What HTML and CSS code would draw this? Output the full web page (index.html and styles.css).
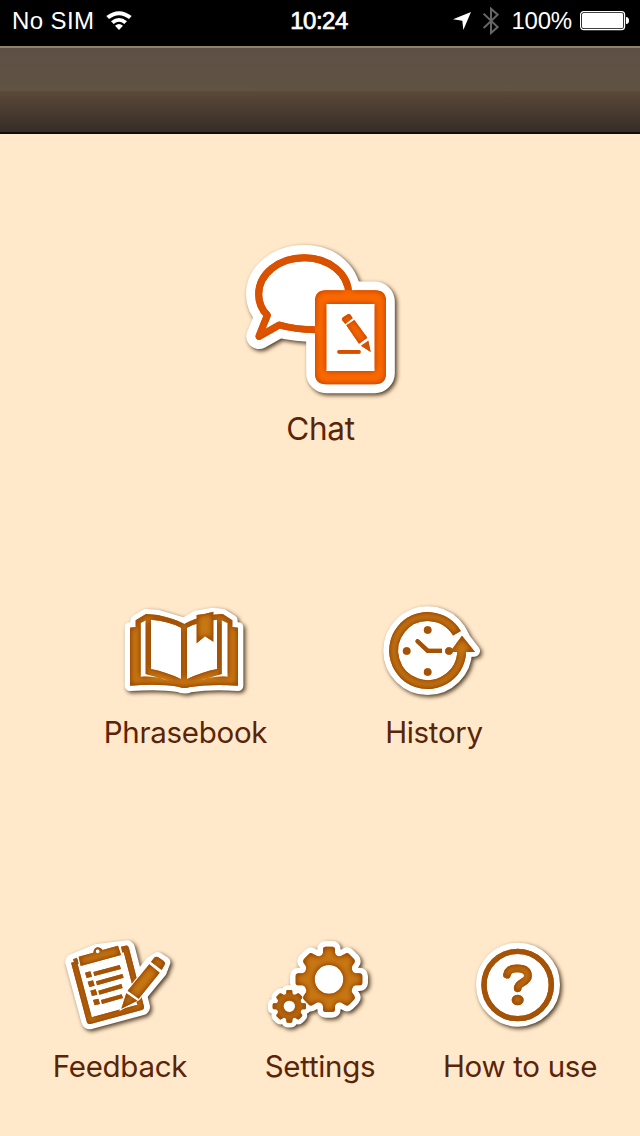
FILE: index.html
```html
<!DOCTYPE html>
<html lang="en">
<head>
    <meta charset="UTF-8">
    <meta name="viewport" content="width=device-width, initial-scale=1.0">
    <title>Menu</title>
    <link rel="stylesheet" href="styles.css">
</head>
<body>

    <svg class="defs" width="0" height="0">
        <defs>
            <!-- darker edge inside each icon shape -->
            <filter id="edge" x="-15%" y="-15%" width="130%" height="130%" color-interpolation-filters="sRGB">
                <feGaussianBlur in="SourceAlpha" stdDeviation="9"/>
                <feComponentTransfer result="inv"><feFuncA type="linear" slope="-2.2" intercept="2.2"/></feComponentTransfer>
                <feFlood flood-color="#a35207"/>
                <feComposite in2="inv" operator="in"/>
                <feComposite in2="SourceAlpha" operator="in" result="rim"/>
                <feMerge><feMergeNode in="SourceGraphic"/><feMergeNode in="rim"/></feMerge>
            </filter>
            <filter id="edgeChat" x="-15%" y="-15%" width="130%" height="130%" color-interpolation-filters="sRGB">
                <feGaussianBlur in="SourceAlpha" stdDeviation="9"/>
                <feComponentTransfer result="inv"><feFuncA type="linear" slope="-2" intercept="2"/></feComponentTransfer>
                <feFlood flood-color="#d65000"/>
                <feComposite in2="inv" operator="in"/>
                <feComposite in2="SourceAlpha" operator="in" result="rim"/>
                <feMerge><feMergeNode in="SourceGraphic"/><feMergeNode in="rim"/></feMerge>
            </filter>
            <path id="gearShape" fill-rule="evenodd" d="M-18 -90 Q-18 -98 -10 -98 H10 Q18 -98 18 -90 V-80 Q19 -73 26 -70 Q34 -67 40 -72 L49 -77 Q55 -81 60 -76 L75 -61 Q80 -55 76 -49 L70 -41 Q66 -34 70 -26 Q73 -19 80 -18 H91 Q100 -18 100 -10 V10 Q100 18 91 18 H80 Q73 19 70 26 Q66 34 70 41 L76 49 Q80 55 75 61 L60 76 Q55 81 49 77 L40 72 Q34 67 26 70 Q19 73 18 80 V90 Q18 98 10 98 H-10 Q-18 98 -18 90 V80 Q-19 73 -26 70 Q-34 67 -40 72 L-49 77 Q-55 81 -60 76 L-75 61 Q-80 55 -76 49 L-70 41 Q-66 34 -70 26 Q-73 19 -80 18 H-91 Q-100 18 -100 10 V-10 Q-100 -18 -91 -18 H-80 Q-73 -19 -70 -26 Q-66 -34 -70 -41 L-76 -49 Q-80 -55 -75 -61 L-60 -76 Q-55 -81 -49 -77 L-40 -72 Q-34 -67 -26 -70 Q-19 -73 -18 -80 Z M43 0 A43 43 0 1 0 -43 0 A43 43 0 1 0 43 0 Z"/>
        </defs>
    </svg>

    <header class="status">
        <div class="status-left">
            <span class="carrier">No SIM</span>
            <svg class="wifi" width="26" height="20" viewBox="0 0 78 60">
                <path d="M1 15 Q39 -13 77 15 L69 24 Q39 1 9 24Z M15 31 Q39 11 63 31 L55 39 Q39 25 23 39Z M27 44 Q39 34 51 44 L39 57Z"/>
            </svg>
        </div>
        <div class="status-time">10:24</div>
        <div class="status-right">
            <svg class="location" width="18" height="18" viewBox="0 0 54 54">
                <path d="M54 0 L31 54 L28 26 L0 22Z"/>
            </svg>
            <svg class="bluetooth" width="16" height="28" viewBox="0 0 48 84">
                <path d="M2 20 L44 60 L24 78 V5 L44 23 L2 63"/>
            </svg>
            <span class="percent">100%</span>
            <svg class="battery" width="50" height="20" viewBox="0 0 50 20">
                <rect class="case" x=".6" y=".6" width="44" height="18" rx="3"/>
                <rect x="2" y="2" width="41.2" height="15.2" rx="1.6"/>
                <path d="M46 6 Q49 6 49 9.5 Q49 13 46 13Z"/>
            </svg>
        </div>
    </header>

    <div class="navbar"></div>

    <main class="menu">
        <div class="row row-chat">
            <a class="item">
                <svg class="icon" width="160" height="160" viewBox="15 15 480 480">
                    <g class="paper">
                        <path stroke-width="76" d="M300 282 Q190 286 133 270 L72 304 L98 241 Q71 215 71 178 C71 118 130 68 208 68 C285 68 341 118 341 190Z"/>
                        <rect x="240" y="166" width="213" height="282" rx="34" stroke-width="53"/>
                    </g>
                    <g class="chat-ink" filter="url(#edgeChat)">
                        <path class="chat-line" d="M250 284 Q185 285 133 270 L72 304 L97 241 Q71 215 71 178 C71 118 130 68 208 68 C280 68 341 115 341 178"/>
                        <path fill-rule="evenodd" d="M273 166 H420 Q453 166 453 199 V415 Q453 448 420 448 H273 Q240 448 240 415 V199 Q240 166 273 166Z M274 207 V408 H419 V207Z"/>
                        <path d="M321 255 Q319 250 324 247 L338 238 Q343 235 347 240 L353 250 L331 267Z M334 271 L358 255 L397 308 L372 326Z M378 332 L400 317 L407 351Z"/>
                        <rect x="307" y="345" width="70" height="11" rx="5"/>
                    </g>
                </svg>
                <span class="label label-chat">Chat</span>
            </a>
        </div>

        <div class="row row-middle">
            <a class="item">
                <svg class="icon" width="130" height="95" viewBox="75 30 390 285">
                    <path class="paper" stroke-width="32" d="M105 98 L122 96 V76 L153 58 L188 60 L268 84 L305 62 L355 54 L383 58 L412 76 V96 L429 98 V272 Q350 266 285 276 Q268 283 250 275 Q195 266 105 272Z"/>
                    <path class="ink" filter="url(#edge)" fill-rule="evenodd" d="M105 98 L122 96 V76 L153 57 L188 60 Q240 71 268 87 Q294 71 346 60 L383 57 L412 76 V96 L429 98 V272 Q350 266 285 276 Q268 283 250 275 Q195 266 105 272Z M137 84 L152 76 V237 L222 257 Q180 242 137 245Z M398 84 L380 76 V237 L312 257 Q355 242 398 245Z M168 74 Q220 78 258 98 V252 Q215 232 168 222Z M366 74 Q315 78 276 98 V252 Q319 232 366 222Z"/>
                    <path class="ink" filter="url(#edge)" d="M305 60 Q332 57 355 50 V140 L330 124 L305 145Z"/>
                </svg>
                <span class="label label-phrasebook">Phrasebook</span>
            </a>
            <a class="item">
                <svg class="icon" width="110" height="95" viewBox="30 30 330 285">
                    <g class="paper">
                        <circle cx="173" cy="167" r="116" stroke-width="34"/>
                        <path stroke-width="34" d="M276 120 L313 168 L240 170Z"/>
                    </g>
                    <g class="ink" filter="url(#edge)">
                        <path class="ring" d="M275 164 A102 102 0 1 1 261 115"/>
                        <path d="M276 122 L315 171 H240Z"/>
                        <circle cx="173" cy="105" r="11.5"/>
                        <circle cx="110" cy="168" r="11.5"/>
                        <circle cx="173" cy="231" r="11.5"/>
                        <circle cx="237" cy="168" r="11.5"/>
                        <path d="M147 134 L176 161 H216 V174 H171 L138 143 Q134 138 138 134 Q142 130 147 134Z"/>
                    </g>
                </svg>
                <span class="label label-history">History</span>
            </a>
        </div>

        <div class="row row-bottom">
            <a class="item">
                <svg class="icon" width="120" height="100" viewBox="30 15 360 300">
                    <g class="paper">
                        <path stroke-width="50" d="M71 96 L119 273 L275 231 L230 56 L143 67Z"/>
                        <path stroke-width="34" d="M323 83 L344 97 L333 126 L264 209 L215 235 L233 183 L304 95Z"/>
                    </g>
                    <g class="ink" filter="url(#edge)">
                        <path class="frame" d="M72 96 L119 273 L273 231 L228 56 L215 59 M72 96 L84 92"/>
                        <path d="M105 128 l16 -4 5 16 -16 4Z M113 155 l16 -4 5 16 -16 4Z M121 182 l16 -4 5 16 -16 4Z M129 210 l16 -4 5 16 -16 4Z"/>
                        <path d="M130 126 L209 105 L213 117 L133 138Z M138 154 L217 132 L221 143 L141 166Z M145 182 L214 162 L218 174 L148 194Z M153 210 L215 193 L219 204 L156 222Z"/>
                    </g>
                    <path class="gap" d="M86 80 L130 68 Q132 53 143 52 Q153 52 158 60 L204 47 L213 75 L92 108Z"/>
                    <path class="ink" filter="url(#edge)" fill-rule="evenodd" d="M86 80 L130 68 Q132 53 143 52 Q153 52 158 60 L204 47 L213 75 L92 108Z M149 64 A6 6 0 1 0 137 64 A6 6 0 1 0 149 64Z"/>
                    <path class="gap" d="M298 103 L330 128 L266 207 L215 235 L233 183Z"/>
                    <g class="ink" filter="url(#edge)">
                        <path d="M303 95 L314 82 Q319 78 325 82 L341 93 Q347 98 344 104 L335 120Z"/>
                        <path d="M298 103 L329 128 L266 206 L233 182Z"/>
                        <path d="M229 190 L262 212 L214 236Z"/>
                    </g>
                </svg>
                <span class="label">Feedback</span>
            </a>
            <a class="item">
                <svg class="icon" width="110" height="100" viewBox="30 15 330 300">
                    <g class="paper">
                        <use href="#gearShape" transform="translate(222 148)" stroke-width="34"/>
                        <use href="#gearShape" transform="translate(103 229) scale(.5)" stroke-width="58"/>
                        <circle cx="222" cy="148" r="50"/>
                    </g>
                    <use class="ink" href="#gearShape" transform="translate(222 148)" filter="url(#edge)"/>
                    <g class="gap">
                        <use href="#gearShape" transform="translate(103 229) scale(.5)"/>
                        <circle cx="103" cy="229" r="25"/>
                    </g>
                    <g class="ink" filter="url(#edge)">
                        <use href="#gearShape" transform="translate(103 229) scale(.5)"/>
                    </g>
                    <circle class="small-ring" cx="103" cy="229" r="20"/>
                </svg>
                <span class="label">Settings</span>
            </a>
            <a class="item">
                <svg class="icon" width="100" height="100" viewBox="105 15 300 300">
                    <circle class="paper" cx="249" cy="164" r="109" stroke-width="34"/>
                    <g class="ink" filter="url(#edge)">
                        <circle class="help-ring" cx="248" cy="165" r="101"/>
                        <path class="help-hook" d="M216 134 Q220 115 246 115 Q279 115 279 138 C279 158 248 156 248 175"/>
                        <ellipse cx="248" cy="210" rx="18" ry="16"/>
                    </g>
                </svg>
                <span class="label">How to use</span>
            </a>
        </div>
    </main>

</body>
</html>
```

FILE: styles.css
```css
body {
    margin: 0;
    width: 640px;
    height: 1136px;
    overflow: hidden;
    background-color: #ffe9ca;
    font-family: Inter, "Liberation Sans", sans-serif;
    color: #5a2408;
}
.defs {
    display: block;
}

/* status bar */
.status {
    display: grid;
    grid-template-columns: 1fr 60px 1fr;
    height: 46px;
    box-sizing: border-box;
    padding: 0 10px 5px 12px;
    background-color: #000;
    color: #fff;
    fill: #fff;
    font-family: "Liberation Sans", sans-serif;
    font-size: 24px;
    line-height: 42px;
}
.status-left,
.status-right {
    display: flex;
    align-items: center;
}
.status-right {
    justify-content: flex-end;
}
.wifi {
    margin-left: 12px;
}
.carrier {
    letter-spacing: 0.4px;
}
.status-time {
    margin-left: -4px;
    text-align: center;
    letter-spacing: -0.5px;
    -webkit-text-stroke: 0.7px #fff;
}
.location {
    margin-right: 12px;
}
.bluetooth path {
    fill: none;
    stroke: #666;
    stroke-width: 6;
}
.percent {
    margin: 0 8px 0 12px;
    letter-spacing: -0.2px;
}
.battery .case {
    fill: none;
    stroke: #fff;
    stroke-width: 1.2;
}

.navbar {
    height: 88px;
    box-sizing: border-box;
    border-top: 2px solid #927f66;
    border-bottom: 2px solid #120d09;
    background: linear-gradient(#5c5045 0, #5f5144 20px, #615342 43px, #5c4939 43px, #362d27 84px);
}

/* menu */
.menu {
    padding-top: 106px;
}
.row {
    display: grid;
    justify-content: center;
}
.row-middle {
    grid-template-columns: 170px 170px;
    column-gap: 80px;
    margin-top: 156px;
    padding-right: 20px;
}
.row-bottom {
    grid-template-columns: repeat(3, 200px);
    margin-top: 183px;
}
.item {
    display: flex;
    flex-direction: column;
    align-items: center;
}
.icon {
    display: block;
    overflow: visible;
    filter: drop-shadow(2px 2px 2px rgba(50, 30, 10, 0.85));
}
.label {
    margin-top: 12px;
    font-size: 29.5px;
    line-height: 40px;
    letter-spacing: -0.3px;
    white-space: nowrap;
}
.row-bottom .label {
    margin-top: 11px;
}
.row .label-chat {
    margin-top: 9px;
    padding-left: 1px;
    font-size: 31.5px;
}
.label-phrasebook {
    padding-left: 1px;
}
.label-history {
    padding-right: 2px;
}

/* icon parts */
.paper {
    fill: #fff;
    stroke: #fff;
    stroke-linejoin: round;
}
.ink {
    fill: #c87813;
}
.chat-ink {
    fill: #fb6900;
}
.gap {
    fill: #fff;
    stroke: #fff;
    stroke-width: 8;
}
.chat-line {
    fill: none;
    stroke: #e05500;
    stroke-width: 21;
    stroke-linejoin: round;
}
.ring {
    fill: none;
    stroke: #c87813;
    stroke-width: 27;
}
.frame {
    fill: none;
    stroke: #c87813;
    stroke-width: 18;
    stroke-linejoin: round;
}
.small-ring {
    fill: #fff;
    stroke: #a9590a;
    stroke-width: 6;
}
.help-ring {
    fill: none;
    stroke: #b0600c;
    stroke-width: 16;
}
.help-hook {
    fill: none;
    stroke: #c87813;
    stroke-width: 23;
    stroke-linecap: round;
}
```
